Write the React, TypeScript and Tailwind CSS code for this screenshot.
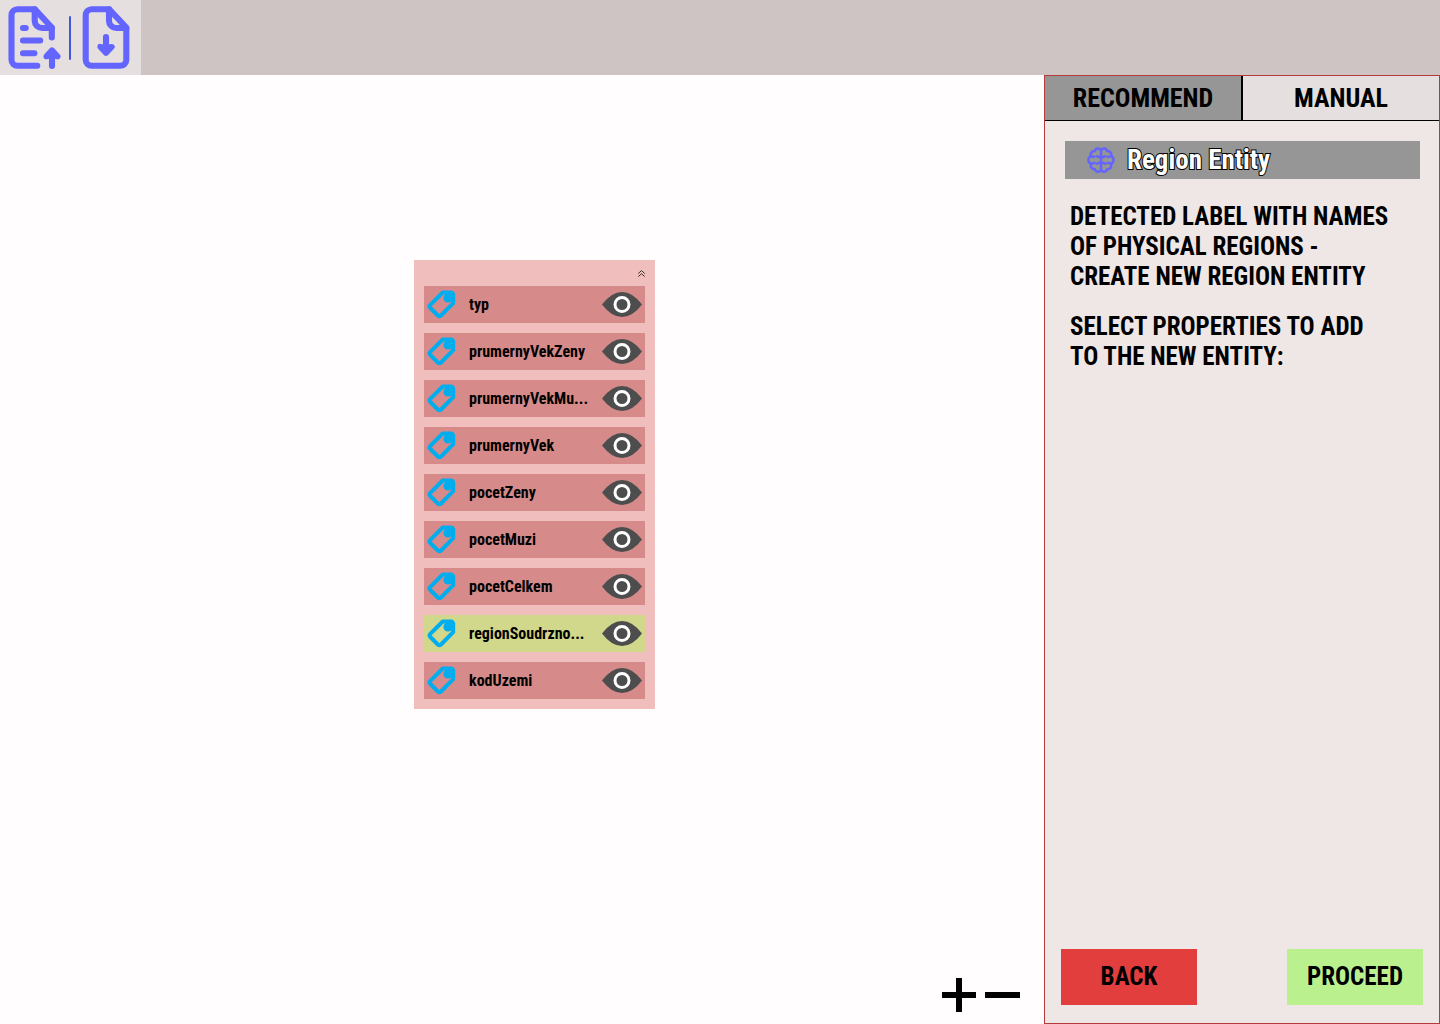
const properties = [
  { name: "typ" },
  { name: "prumernyVekZeny" },
  { name: "prumernyVekMu..." },
  { name: "prumernyVek" },
  { name: "pocetZeny" },
  { name: "pocetMuzi" },
  { name: "pocetCelkem" },
  { name: "regionSoudrzno...", selected: true },
  { name: "kodUzemi" },
];

function UploadIcon() {
  return (
    <svg width="56" height="65" viewBox="7 5 56 65" fill="none" stroke="#6464ff" strokeWidth="6.1" strokeLinecap="round" strokeLinejoin="round" aria-hidden="true">
      <path d="M37.300 65.800H17.500a6 6 0 0 1-6-6V15.200a6 6 0 0 1 6-6h17.200L51.800 27.500V37.500" />
      <path d="M34.700 9.200v11.500a7.300 7.300 0 0 0 7.300 7.300H51.800" />
      <path d="M23 28h2.700M23 40.500h17.200M23 53.200h11.400M52 66V54" />
      <path d="M46.300 56.500 52 50.200l5.600 6.300-5.600-1z" fill="#6464ff" strokeWidth="5.800" />
    </svg>
  );
}

function DownloadIcon() {
  return (
    <svg width="50" height="65" viewBox="81 5 50 65" fill="none" stroke="#6464ff" strokeWidth="6.1" strokeLinecap="round" strokeLinejoin="round" aria-hidden="true">
      <path d="M91.700 9.200h17.300l17.300 18.300v32.300a6 6 0 0 1-6 6H91.700a6 6 0 0 1-6-6V15.200a6 6 0 0 1 6-6z" />
      <path d="M109 9.200v11.500a7.300 7.300 0 0 0 7.300 7.300h10M106 37v12" />
      <path d="M100.200 46.800 106 53l5.800-6.200-5.800 1z" fill="#6464ff" strokeWidth="5.800" />
    </svg>
  );
}

function BrainIcon() {
  const half =
    "M14 3.200C12.800.7 8.600.7 7.900 4 4.800 3.600 2.800 6.600 4.200 9c-3.700 1.500-3.700 6.500 0 8-1.200 2.700.7 5.500 3.700 5.200C8.800 25.600 13 25.400 14 22.900M10 9.200c1 .8 2.200 1 4 1M4.200 9c1.200.8 2.200.9 3.200.7M4.200 17c1-1 2-1.300 3.400-1M10 16.800c1-.9 2.200-1.200 4-1.200";
  return (
    <svg width="28" height="26" viewBox="0 0 28 26" fill="none" stroke="#6464ff" strokeWidth="2.500" strokeLinecap="round" strokeLinejoin="round" aria-hidden="true">
      <path d={half} />
      <path d={half} transform="matrix(-1 0 0 1 28 0)" />
      <path d="M14 3v20" />
    </svg>
  );
}

function TagIcon() {
  return (
    <svg width="29" height="29" viewBox="0 0 29 29" fill="none" aria-hidden="true">
      <path d="M15.700 2.500h8.200a2.300 2.300 0 0 1 2.300 2.300V13.200L14 25.500q-1.600 1.400-3.200 0L3.300 18q-1.500-1.600 0-3.200z" stroke="#00aeef" strokeWidth="4" strokeLinejoin="round" />
      <circle cx="21" cy="8" r="4.600" fill="#00aeef" />
      <path d="M22 6.500a1.800 1.800 0 0 0 2.500 1.200" stroke="#2d9fd4" strokeWidth="0.8" />
    </svg>
  );
}

function EyeIcon() {
  return (
    <svg width="40" height="25" viewBox="0 0 40 25" fill="none" aria-hidden="true">
      <path d="M0 12.500Q9.500 0 20 0T40 12.500Q30.500 25 20 25T0 12.500z" fill="#4d4d4d" />
      <circle cx="20" cy="12.500" r="7" stroke="white" strokeWidth="3" />
    </svg>
  );
}

export default function App() {
  return (
    <div className="flex min-h-screen flex-col bg-[#fffdfe] font-['Roboto_Condensed',Roboto,sans-serif] font-bold text-black">
      <header className="flex bg-[#cdc4c3]">
        <div className="flex h-[75px] items-center bg-[#e5dfdf] pr-2.5 pl-[7px]">
          <button type="button" aria-label="Upload file"><UploadIcon /></button>
          <div className="mx-1.5 h-11 w-0.5 rounded-full bg-[#4656dc]" />
          <button type="button" aria-label="Download file" className="ml-1"><DownloadIcon /></button>
        </div>
      </header>

      <div className="flex grow">
        <main className="relative flex grow items-end justify-end">
          <section className="absolute top-[185px] left-[414px] w-[241px] bg-[#f1bebe] px-2.5 pb-2.5">
            <div className="flex h-[26px] items-center justify-end">
              <button type="button" aria-label="Collapse">
                <svg width="7" height="7" viewBox="0 0 7 7" fill="none" stroke="#222" strokeWidth="0.9" aria-hidden="true">
                  <path d="M.3 3.500 3.500.6l3.200 2.900M.3 6.600l3.200-2.900 3.200 2.900" />
                </svg>
              </button>
            </div>
            <ul className="flex flex-col gap-2.5">
              {properties.map((p) => (
                <li key={p.name} className={`flex h-[37px] items-center px-[3px] text-base ${p.selected ? "bg-[#d1d88b]" : "bg-[#d68b8a]"}`}>
                  <TagIcon />
                  <span className="ml-[13px] grow whitespace-nowrap">{p.name}</span>
                  <button type="button" aria-label={`Toggle ${p.name}`}><EyeIcon /></button>
                </li>
              ))}
            </ul>
          </section>
          <div className="flex gap-2 pr-6 pb-3">
            <button type="button" aria-label="Zoom in">
              <svg width="35" height="35" viewBox="0 0 35 35" stroke="black" strokeWidth="6" aria-hidden="true"><path d="M0 18h34M17 1v34" /></svg>
            </button>
            <button type="button" aria-label="Zoom out">
              <svg width="35" height="35" viewBox="0 0 35 35" stroke="black" strokeWidth="6" aria-hidden="true"><path d="M0 18h35" /></svg>
            </button>
          </div>
        </main>

        <aside className="flex w-[27.5%] shrink-0 flex-col border border-[#b53b3b] bg-[#efe6e6]">
          <div className="flex h-[45px] border-b border-black text-[26px]">
            <button type="button" className="flex-1 border-r-2 border-black bg-[#969696]">RECOMMEND</button>
            <button type="button" className="flex-1 bg-[#e5dfdf]">MANUAL</button>
          </div>
          <div className="flex grow flex-col pt-5 pr-[19px] pl-5">
            <div className="flex h-[38px] items-center gap-3 bg-[#969696] pl-[22px]">
              <BrainIcon />
              <h2 className="text-[27px] text-white [-webkit-text-stroke:2px_black] [paint-order:stroke_fill]">Region Entity</h2>
            </div>
            <div className="mt-[23px] flex flex-col gap-5 px-[5px] text-[25px] leading-[30px]">
              <p>DETECTED LABEL WITH NAMES<br />OF PHYSICAL REGIONS -<br />CREATE NEW REGION ENTITY</p>
              <p>SELECT PROPERTIES TO ADD<br />TO THE NEW ENTITY:</p>
            </div>
          </div>
          <div className="flex justify-between px-4 pb-[18px] text-[25px]">
            <button type="button" className="h-14 w-[136px] bg-[#e33e3e]">BACK</button>
            <button type="button" className="h-14 w-[136px] bg-[#bbf08f]">PROCEED</button>
          </div>
        </aside>
      </div>
    </div>
  );
}
